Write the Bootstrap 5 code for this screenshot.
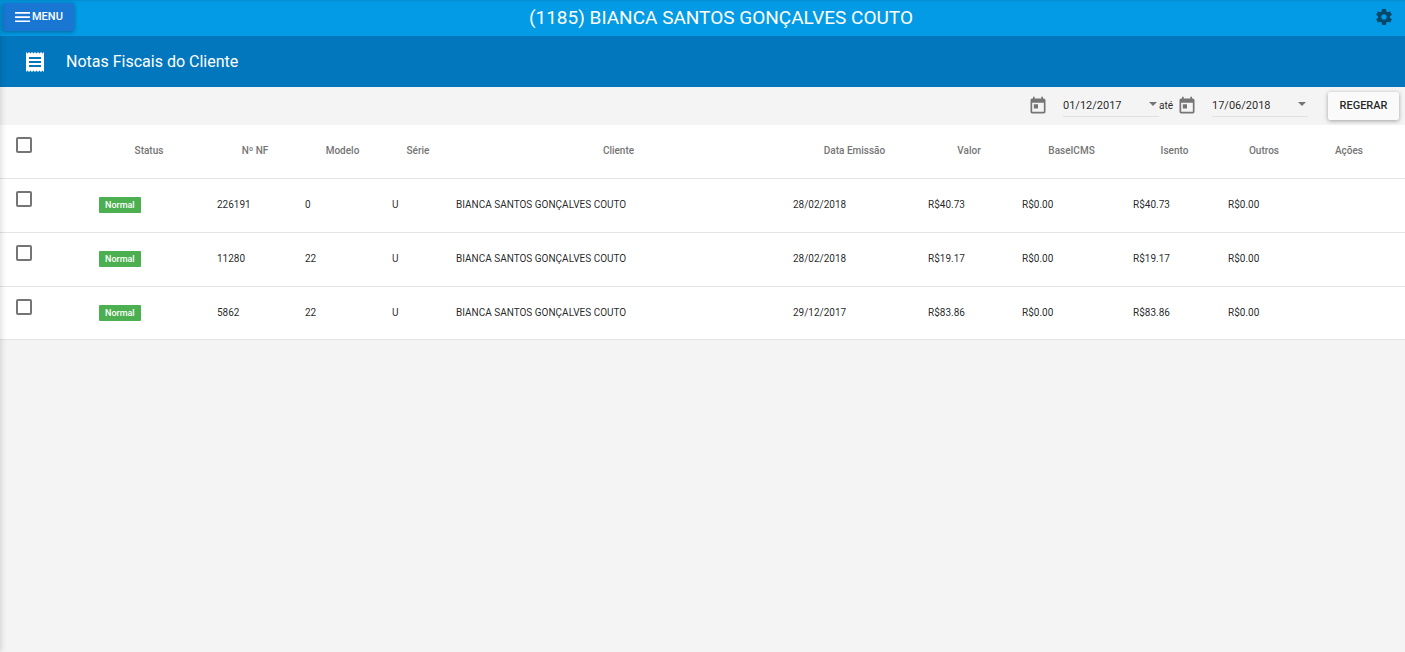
<!DOCTYPE html>
<html lang="pt-BR">
<head>
<meta charset="utf-8">
<meta name="viewport" content="width=device-width, initial-scale=1">
<title>Notas Fiscais do Cliente</title>
<link href="https://cdn.jsdelivr.net/npm/bootstrap@5.3.0/dist/css/bootstrap.min.css" rel="stylesheet">
<style>
  body { font-family: Roboto, "Liberation Sans", sans-serif; background: #f4f4f4; font-size: 10px; line-height: 20px; color: rgba(0,0,0,.87); }
  /* shadow cast by the closed side drawer */
  .drawer { width: 10px; left: -10px; box-shadow: 0 0 7px rgba(0,0,0,.2); z-index: 1040; }
  .topbar { background: #039be5; height: 36px; padding-bottom: 2px; box-shadow: inset 0 2px 2px -1px rgba(0,0,0,.1); }
  .topbar h1 { font-size: 19px; line-height: 34px; font-weight: 400; padding-top: 1px; }
  .btn-menu, .btn-menu:hover { background: #1976d2; color: #fff; border-radius: 2px; box-shadow: 0 1px 4px rgba(0,0,0,.35); width: 71px; height: 28px; font-size: 11px; line-height: 26px; font-weight: 500; padding: 0 0 0 11px; margin-left: 3px; }
  .btn-gear { margin-right: 13px; color: #03486b; }
  .titlebar { background: #0277bd; height: 51px; padding-left: 25px; gap: 21px; }
  .titlebar h2 { font-size: 16px; line-height: 24px; font-weight: 400; }
  .filters { height: 38px; padding-right: 6px; }
  .filters svg.cal { color: #757575; margin-right: 15px; }
  .filters label { margin-right: 4px; }
  .date-field { width: 96px; height: 24px; margin-bottom: 2px; border-bottom: 1px solid #e0e0e0; }
  .date-field input { font-size: 11px; line-height: 20px; padding: 2px 0 0; color: rgba(0,0,0,.87); outline: 0; }
  .date-field svg { color: #757575; margin: 0 2px 2px 0; }
  .btn-regerar, .btn-regerar:hover { background: #fafafa; color: rgba(0,0,0,.87); border-radius: 2px; box-shadow: 0 1px 4px rgba(0,0,0,.35); height: 28px; width: 71px; font-size: 11px; line-height: 28px; font-weight: 500; margin-left: 20px; }
  .notes { table-layout: fixed; min-width: 1200px; background: #fff; }
  .notes th, .notes td { height: 54px; padding: 0 6px; border-bottom: 1px solid #e4e4e4; }
  .notes th, .notes tr:last-child td { height: 53px; }
  .notes th { font-weight: 500; color: #757575; text-align: center; }
  .notes th:nth-child(2) { padding-right: 12px; }
  .notes th:last-child { padding-right: 19px; }
  .notes .pick { padding: 12px 16px 0; vertical-align: top; text-align: left; }
  .pick input { appearance: none; display: block; width: 16px; height: 16px; margin: 0; border: 2px solid #757575; border-radius: 2px; background: #fff; }
  .pick input:checked { background: #1976d2; border-color: #1976d2; }
  .tag-ok { display: inline-block; background: #4caf50; color: #fff; font-size: 9px; line-height: 16px; font-weight: 500; padding: 0 6px; border-radius: 1px; vertical-align: middle; }
</style>
</head>
<body>
<div class="drawer position-fixed top-0 bottom-0"></div>
<header>
  <nav class="topbar d-flex align-items-center">
    <button type="button" class="btn btn-menu border-0 d-flex align-items-center flex-shrink-0">
      <svg width="18" height="16" viewBox="0 0 18 16" fill="currentColor" aria-hidden="true"><path d="M1 3h15v1.7H1zM1 7.2h15v1.7H1zM1 11.4h15v1.7H1z"/></svg><span>MENU</span>
    </button>
    <h1 class="m-0 flex-grow-1 text-center text-white text-nowrap">(1185) BIANCA SANTOS GONÇALVES COUTO</h1>
    <button type="button" class="btn btn-gear border-0 p-0 ps-2 d-flex flex-shrink-0" aria-label="Configurações">
      <svg width="16" height="16" viewBox="2 2 20 20" fill="currentColor"><path d="M19.43 12.98c.04-.32.07-.64.07-.98s-.03-.66-.07-.98l2.11-1.65c.19-.15.24-.42.12-.64l-2-3.46c-.12-.22-.39-.3-.61-.22l-2.49 1c-.52-.4-1.08-.73-1.69-.98l-.38-2.65C14.46 2.18 14.25 2 14 2h-4c-.25 0-.46.18-.49.42l-.38 2.65c-.61.25-1.17.59-1.69.98l-2.49-1c-.23-.09-.49 0-.61.22l-2 3.46c-.13.22-.07.49.12.64l2.11 1.65c-.04.32-.07.65-.07.98s.03.66.07.98l-2.11 1.65c-.19.15-.24.42-.12.64l2 3.46c.12.22.39.3.61.22l2.49-1c.52.4 1.08.73 1.69.98l.38 2.65c.03.24.24.42.49.42h4c.25 0 .46-.18.49-.42l.38-2.65c.61-.25 1.17-.59 1.69-.98l2.49 1c.23.09.49 0 .61-.22l2-3.46c.12-.22.07-.49-.12-.64l-2.11-1.65zM12 15.5c-1.93 0-3.5-1.57-3.5-3.5s1.57-3.5 3.5-3.5 3.5 1.57 3.5 3.5-1.57 3.5-3.5 3.5z"/></svg>
    </button>
  </nav>
  <div class="titlebar d-flex align-items-center text-white">
    <svg width="20" height="20" viewBox="2 2 20 20" fill="currentColor" aria-hidden="true"><path d="M18 17H6v-2h12v2zm0-4H6v-2h12v2zm0-4H6V7h12v2zM3 22l1.5-1.5L6 22l1.5-1.5L9 22l1.5-1.5L12 22l1.5-1.5L15 22l1.5-1.5L18 22l1.5-1.5L21 22V2l-1.5 1.5L18 2l-1.5 1.5L15 2l-1.5 1.5L12 2l-1.5 1.5L9 2 7.5 3.5 6 2 4.5 3.5 3 2v20z"/></svg>
    <h2 class="m-0">Notas Fiscais do Cliente</h2>
  </div>
</header>
<main>
  <form class="filters d-flex align-items-center justify-content-end">
    <svg class="cal" width="20" height="20" viewBox="0 0 24 24" fill="currentColor" aria-hidden="true"><path d="M19 3h-1V1h-2v2H8V1H6v2H5c-1.11 0-1.99.9-1.99 2L3 19c0 1.1.89 2 2 2h14c1.1 0 2-.9 2-2V5c0-1.1-.9-2-2-2zm0 16H5V8h14v11zM7 10h5v5H7z"/></svg>
    <div class="date-field d-flex align-items-center">
      <input type="text" class="border-0 bg-transparent w-100" value="01/12/2017" aria-label="Data inicial">
      <svg class="flex-shrink-0" width="8" height="4" viewBox="0 0 8 4" fill="currentColor" aria-hidden="true"><path d="M0 0h8L4 4z"/></svg>
    </div>
    <label for="ate">até</label>
    <svg class="cal" width="20" height="20" viewBox="0 0 24 24" fill="currentColor" aria-hidden="true"><path d="M19 3h-1V1h-2v2H8V1H6v2H5c-1.11 0-1.99.9-1.99 2L3 19c0 1.1.89 2 2 2h14c1.1 0 2-.9 2-2V5c0-1.1-.9-2-2-2zm0 16H5V8h14v11zM7 10h5v5H7z"/></svg>
    <div class="date-field d-flex align-items-center">
      <input type="text" id="ate" class="border-0 bg-transparent w-100" value="17/06/2018">
      <svg class="flex-shrink-0" width="8" height="4" viewBox="0 0 8 4" fill="currentColor" aria-hidden="true"><path d="M0 0h8L4 4z"/></svg>
    </div>
    <button type="button" class="btn btn-regerar border-0 p-0">REGERAR</button>
  </form>
  <table class="notes w-100">
    <colgroup>
      <col style="width:93px"><col style="width:118px"><col style="width:88px"><col style="width:87px"><col style="width:64px"><col><col style="width:135px"><col style="width:94px"><col style="width:111px"><col style="width:95px"><col style="width:84px"><col style="width:99px">
    </colgroup>
    <thead>
      <tr><th class="pick"><input type="checkbox" aria-label="Selecionar todas"></th><th>Status</th><th>Nº NF</th><th>Modelo</th><th>Série</th><th>Cliente</th><th>Data Emissão</th><th>Valor</th><th>BaseICMS</th><th>Isento</th><th>Outros</th><th>Ações</th></tr>
    </thead>
    <tbody>
      <tr><td class="pick"><input type="checkbox" aria-label="Selecionar 226191"></td><td><span class="tag-ok">Normal</span></td><td>226191</td><td>0</td><td>U</td><td>BIANCA SANTOS GONÇALVES COUTO</td><td>28/02/2018</td><td>R$40.73</td><td>R$0.00</td><td>R$40.73</td><td>R$0.00</td><td></td></tr>
      <tr><td class="pick"><input type="checkbox" aria-label="Selecionar 11280"></td><td><span class="tag-ok">Normal</span></td><td>11280</td><td>22</td><td>U</td><td>BIANCA SANTOS GONÇALVES COUTO</td><td>28/02/2018</td><td>R$19.17</td><td>R$0.00</td><td>R$19.17</td><td>R$0.00</td><td></td></tr>
      <tr><td class="pick"><input type="checkbox" aria-label="Selecionar 5862"></td><td><span class="tag-ok">Normal</span></td><td>5862</td><td>22</td><td>U</td><td>BIANCA SANTOS GONÇALVES COUTO</td><td>29/12/2017</td><td>R$83.86</td><td>R$0.00</td><td>R$83.86</td><td>R$0.00</td><td></td></tr>
    </tbody>
  </table>
</main>
<script src="https://cdn.jsdelivr.net/npm/bootstrap@5.3.0/dist/js/bootstrap.bundle.min.js"></script>
</body>
</html>
